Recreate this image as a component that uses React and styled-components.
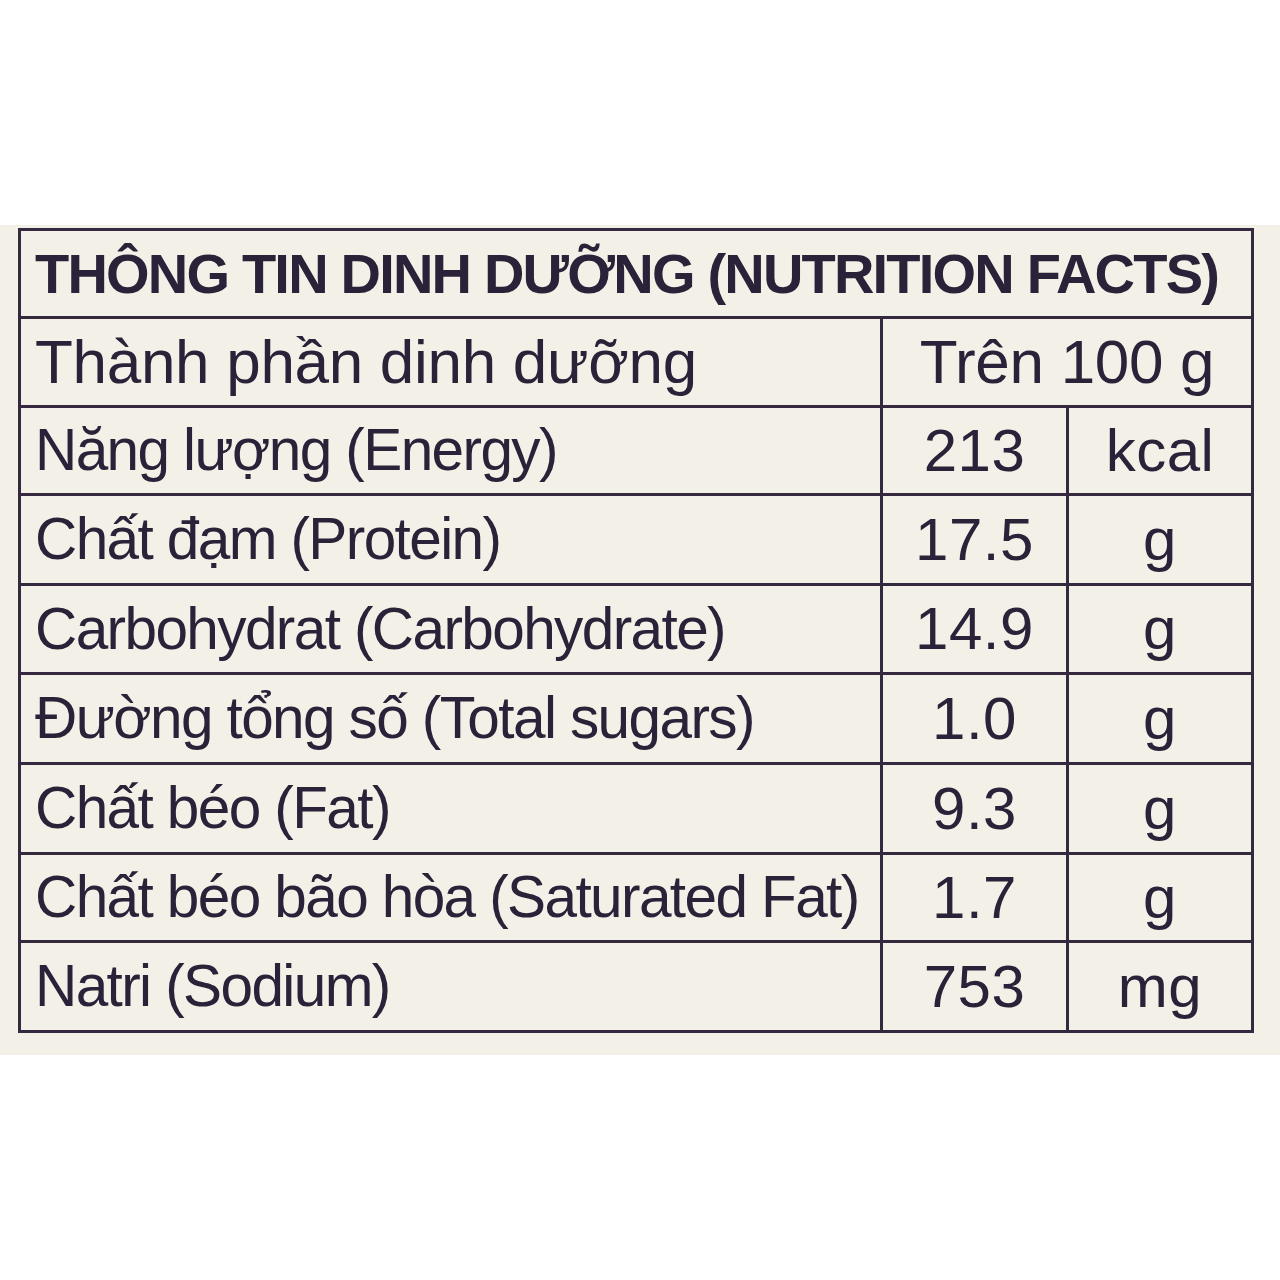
import React from "react";
import styled, { createGlobalStyle } from "styled-components";

const Global = createGlobalStyle`
  html, body { margin: 0; padding: 0; background: #ffffff; }
  body { font-family: "Liberation Sans", Arial, Helvetica, sans-serif; }
`;

const Page = styled.div`
  width: 1280px;
  height: 1280px;
  display: flex;
  flex-direction: column;
  background: #ffffff;
`;

const Band = styled.section`
  margin-top: 225px;
  height: 830px;
  background: #f3f0e8;
  padding: 3px 0 0 18px;
  box-sizing: border-box;
`;

const Table = styled.table`
  border-collapse: collapse;
  table-layout: fixed;
  width: 1233px;
  color: #2a2238;
  border: 3px solid #34293f;
`;

const Row = styled.tr`
  height: ${(p) => p.$h || 89}px;
`;

const variants = {
  title: { size: 56, weight: 700, ls: -1.8 },
  head: { size: 62, weight: 400, ls: -0.3 },
  label: { size: 58.5, weight: 400, ls: -1.6 },
  value: { size: 60, weight: 400, ls: 0.5 },
};

const Cell = styled.td`
  border: 3px solid #34293f;
  padding: 0 0 0 ${(p) => (p.$align === "center" ? 0 : 14)}px;
  text-align: ${(p) => p.$align || "left"};
  vertical-align: middle;
  font-size: ${(p) => variants[p.$kind || "label"].size}px;
  font-weight: ${(p) => variants[p.$kind || "label"].weight};
  letter-spacing: ${(p) => variants[p.$kind || "label"].ls}px;
  white-space: nowrap;
  line-height: 1;
  box-sizing: border-box;
`;

const rows = [
  ["Năng lượng (Energy)", "213", "kcal"],
  ["Chất đạm (Protein)", "17.5", "g"],
  ["Carbohydrat (Carbohydrate)", "14.9", "g"],
  ["Đường tổng số (Total sugars)", "1.0", "g"],
  ["Chất béo (Fat)", "9.3", "g"],
  ["Chất béo bão hòa (Saturated Fat)", "1.7", "g"],
  ["Natri (Sodium)", "753", "mg"],
];

const heights = [88, 90, 89, 90, 90, 88, 90];

export default function App() {
  return (
    <Page>
      <Global />
      <Band>
        <Table>
          <colgroup>
            <col style={{ width: 862 }} />
            <col style={{ width: 186 }} />
            <col style={{ width: 185 }} />
          </colgroup>
          <tbody>
            <Row $h={88}>
              <Cell colSpan={3} $kind="title">
                THÔNG TIN DINH DƯỠNG (NUTRITION FACTS)
              </Cell>
            </Row>
            <Row $h={89}>
              <Cell $kind="head">Thành phần dinh dưỡng</Cell>
              <Cell colSpan={2} $align="center" $kind="head">
                Trên 100 g
              </Cell>
            </Row>
            {rows.map((r, i) => (
              <Row key={r[0]} $h={heights[i]}>
                <Cell $kind="label">{r[0]}</Cell>
                <Cell $align="center" $kind="value">{r[1]}</Cell>
                <Cell $align="center" $kind="value">{r[2]}</Cell>
              </Row>
            ))}
          </tbody>
        </Table>
      </Band>
    </Page>
  );
}
